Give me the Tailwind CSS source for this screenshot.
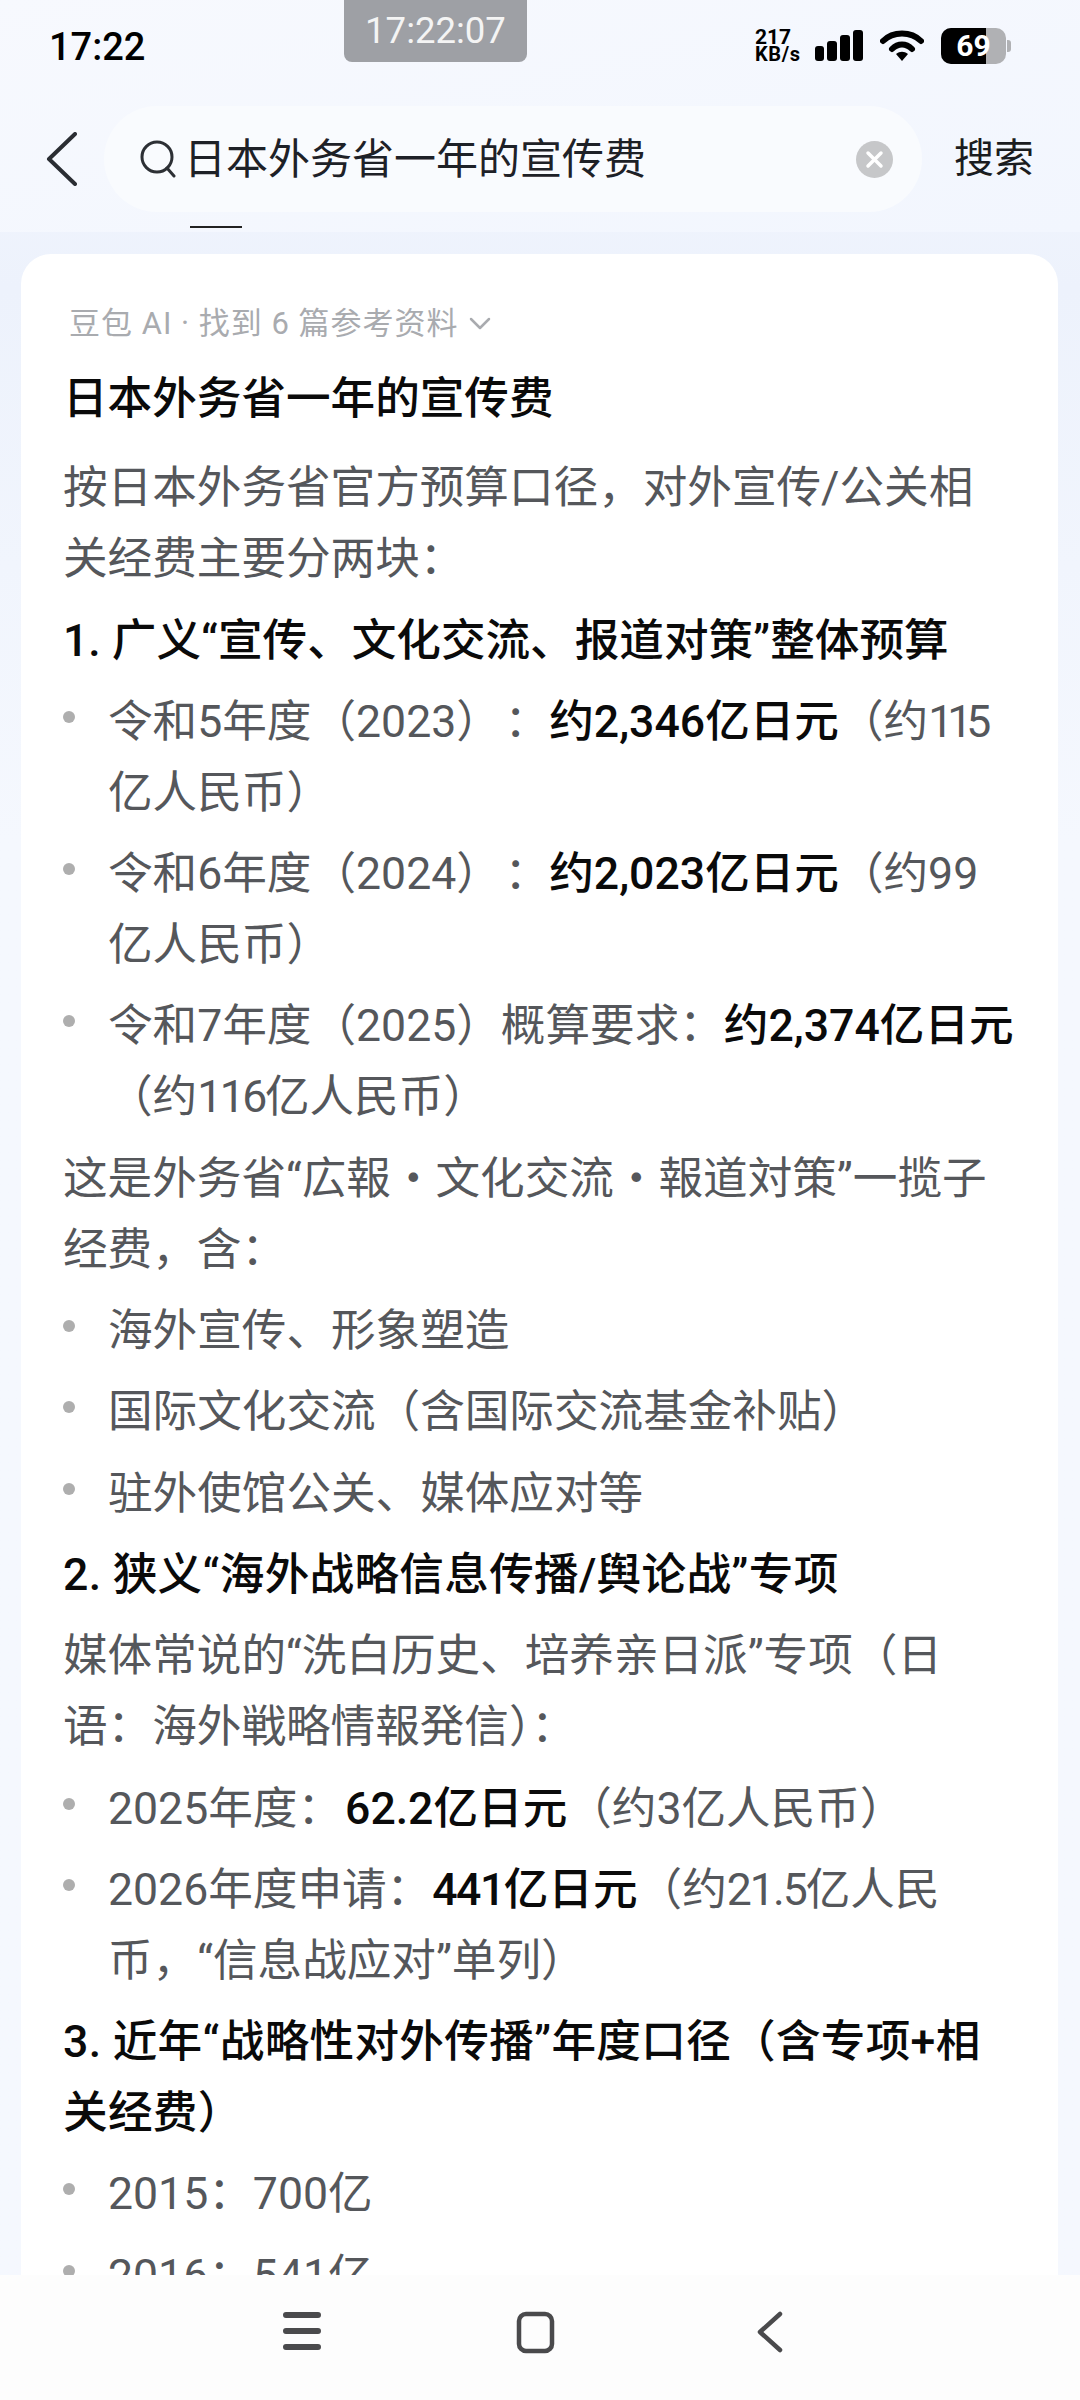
<!DOCTYPE html>
<html lang="zh-CN">
<head>
    <meta charset="utf-8" />
    <meta name="viewport" content="width=device-width, initial-scale=1.0">
    <script src="https://cdn.jsdelivr.net/npm/@tailwindcss/browser@4"></script>
    <title>搜索</title>
</head>
<body class="m-0">
<div class="relative flex flex-col w-[1080px] h-[2400px] overflow-hidden bg-gradient-to-b from-[#f4f7fe] via-[#edf2fc] via-[12%] to-[#f5f8fe] to-[35%] font-['Roboto','Noto_Sans_CJK_SC',sans-serif]">

    <!-- Screenshot time pill -->
    <div class="absolute left-[344px] top-0 w-[183px] h-[62px] rounded-b-[8px] bg-[#9ea0a5] text-[#f4f4f4] text-[36.5px] leading-[62px] text-center">17:22:07</div>

    <!-- Top area -->
    <div class="h-[232px] shrink-0 bg-gradient-to-br from-[#f7f9fe] to-[#f2f6fe]">
        <!-- Status bar -->
        <div class="flex items-center justify-between h-[92px] pl-[49px] pr-[69px]">
            <span class="text-[38px] font-medium text-black relative top-[1px]">17:22</span>
            <div class="flex items-center">
                <div class="flex flex-col text-black font-bold leading-[17px] text-[21px] w-[59px]"><span>217</span><span class="text-[20px] tracking-[0.6px]">KB/s</span></div>
                <svg class="ml-[0px]" width="50" height="34" viewBox="0 0 50 34" fill="#000">
                    <rect x="1" y="17" width="9" height="15" rx="3"/><rect x="13" y="12" width="10" height="20" rx="3"/><rect x="26" y="6" width="10" height="26" rx="3"/><rect x="39" y="1" width="10" height="31" rx="3"/>
                </svg>
                <svg class="ml-[16px]" width="44" height="34" viewBox="0 0 44 34" fill="none" stroke="#000" stroke-width="6" stroke-linecap="round">
                    <path d="M3 12 C13 2 31 2 41 12"/><path d="M12 20 C18 14 26 14 32 20"/><path d="M16 25 L22 32 L28 25 C24 22 20 22 16 25 Z" fill="#000" stroke="none"/>
                </svg>
                <div class="relative ml-[17px] flex items-center w-[65px] h-[36px] rounded-[10px] overflow-hidden bg-[#b0b1b4]">
                    <div class="absolute left-0 top-0 bottom-0 w-[45px] bg-black"></div>
                    <span class="relative w-[65px] text-center text-white font-bold text-[30px] leading-[36px]">69</span>
                </div>
                <div class="ml-[1px] w-[4px] h-[12px] rounded-r-[3px] bg-[#b0b1b4]"></div>
            </div>
        </div>

        <!-- Search row -->
        <div class="flex items-center h-[106px] mt-[14px]">
            <svg class="ml-[45px] shrink-0" width="32" height="54" viewBox="0 0 32 54" fill="none" stroke="#2a2d33" stroke-width="4" stroke-linecap="round" stroke-linejoin="round">
                <path d="M30 2 L4 27 L30 52"/>
            </svg>
            <div class="flex items-center ml-[27px] w-[818px] h-[106px] rounded-full bg-[#f9fbfe]">
                <svg class="ml-[36px] shrink-0" width="38" height="38" viewBox="0 0 38 38" fill="none" stroke="#2d3035" stroke-width="3">
                    <circle cx="17" cy="17" r="15"/><path d="M27 28 L34 36" stroke-linecap="round"/>
                </svg>
                <span class="ml-[6px] text-[42px] text-[#1e2127]">日本外务省一年的宣传费</span>
                <svg class="ml-auto mr-[29px] shrink-0" width="37" height="37" viewBox="0 0 37 37">
                    <circle cx="18.5" cy="18.5" r="18.5" fill="#c6c7c9"/><path d="M12 12 L25 25 M25 12 L12 25" stroke="#fff" stroke-width="3.5" stroke-linecap="round"/>
                </svg>
            </div>
            <span class="ml-[32px] text-[40px] text-[#1a1c20]">搜索</span>
        </div>
        <div class="ml-[190px] mt-[14px] w-[52px] h-[2px] bg-[#222]"></div>
    </div>

    <!-- Answer card -->
    <div class="flex-1 min-h-0 overflow-hidden mx-[21px] w-[1037px] mt-[22px] rounded-t-[30px] bg-white pl-[42px] pr-[20px]">
        <div class="flex items-center mt-[50px] h-[40px] pl-[6px] text-[31px] text-[#a9abaf]">
            <span class="tracking-[1px]">豆包 AI · 找到 6 篇参考资料</span>
            <svg class="ml-[10px]" width="22" height="14" viewBox="0 0 22 14" fill="none" stroke="#a9abaf" stroke-width="2.5" stroke-linecap="round" stroke-linejoin="round"><path d="M2 2 L11 11 L20 2"/></svg>
        </div>
        <div class="flex flex-col gap-[10.3px] mt-[20px] text-[44.6px] leading-[71px] text-[#55575b]">
            <p class="font-medium text-[#0a0a0a] mb-[8px]">日本外务省一年的宣传费</p>
            <p>按日本外务省官方预算口径，对外宣传/公关相<br>关经费主要分两块：</p>
            <p class="font-medium text-[#0a0a0a]">1. 广义“宣传、文化交流、报道对策”整体预算</p>

            <div class="flex"><i class="w-[12px] h-[12px] mt-[24px] mr-[33px] shrink-0 rounded-full bg-[#aeaeae]"></i><p>令和5年度（2023）<span class="ml-[26px] leading-none font-['Noto_Sans_CJK_TC']">：</span><b class="font-medium text-[#0a0a0a]">约2,346亿日元</b>（约<span class="tracking-[-6px]">115</span><br>亿人民币）</p></div>
            <div class="flex"><i class="w-[12px] h-[12px] mt-[24px] mr-[33px] shrink-0 rounded-full bg-[#aeaeae]"></i><p>令和6年度（2024）<span class="ml-[26px] leading-none font-['Noto_Sans_CJK_TC']">：</span><b class="font-medium text-[#0a0a0a]">约2,023亿日元</b>（约99<br>亿人民币）</p></div>
            <div class="flex"><i class="w-[12px] h-[12px] mt-[24px] mr-[33px] shrink-0 rounded-full bg-[#aeaeae]"></i><p>令和7年度（2025）概算要求：<b class="font-medium text-[#0a0a0a]">约2,374亿日元</b><br>（约<span class="tracking-[-2.5px]">116</span>亿人民币）</p></div>

            <p>这是外务省“広報・文化交流・報道対策”一揽子<br>经费，含：</p>

            <div class="flex"><i class="w-[12px] h-[12px] mt-[24px] mr-[33px] shrink-0 rounded-full bg-[#aeaeae]"></i><p>海外宣传、形象塑造</p></div>
            <div class="flex"><i class="w-[12px] h-[12px] mt-[24px] mr-[33px] shrink-0 rounded-full bg-[#aeaeae]"></i><p>国际文化交流（含国际交流基金补贴）</p></div>
            <div class="flex"><i class="w-[12px] h-[12px] mt-[24px] mr-[33px] shrink-0 rounded-full bg-[#aeaeae]"></i><p>驻外使馆公关、媒体应对等</p></div>

            <p class="font-medium text-[#0a0a0a] tracking-[0.3px]">2. 狭义“海外战略信息传播/舆论战”专项</p>
            <p>媒体常说的“洗白历史、培养亲日派”专项（日<br>语：海外戦略情報発信）：</p>

            <div class="flex"><i class="w-[12px] h-[12px] mt-[24px] mr-[33px] shrink-0 rounded-full bg-[#aeaeae]"></i><p>2025年度：<b class="font-medium text-[#0a0a0a] ml-[3px]">62.2亿日元</b>（约3亿人民币）</p></div>
            <div class="flex"><i class="w-[12px] h-[12px] mt-[24px] mr-[33px] shrink-0 rounded-full bg-[#aeaeae]"></i><p>2026年度申请：<b class="font-medium text-[#0a0a0a] ml-[1px]"><span class="tracking-[-1.5px]">441</span>亿日元</b>（约<span class="tracking-[-2px]">21.5</span>亿人民<br>币，“信息战应对”单列）</p></div>

            <p class="font-medium text-[#0a0a0a] tracking-[0.3px]">3. 近年“战略性对外传播”年度口径（含专项+相<br>关经费）</p>

            <div class="flex"><i class="w-[12px] h-[12px] mt-[24px] mr-[33px] shrink-0 rounded-full bg-[#aeaeae]"></i><p>2015：700亿</p></div>
            <div class="flex"><i class="w-[12px] h-[12px] mt-[24px] mr-[33px] shrink-0 rounded-full bg-[#aeaeae]"></i><p>2016：541亿</p></div>
        </div>
    </div>

    <!-- Bottom navigation -->
    <div class="relative flex items-center shrink-0 h-[125px] bg-[#fdfdfd]">
        <svg class="absolute left-[282px] top-[36px]" width="40" height="40" viewBox="0 0 40 40" stroke="#4a4a4c" stroke-width="6" stroke-linecap="round">
            <path d="M4 4 H36 M4 20 H36 M4 36 H36"/>
        </svg>
        <svg class="absolute left-[516px] top-[36px]" width="40" height="44" viewBox="0 0 40 44" fill="none" stroke="#4a4a4c" stroke-width="4.5">
            <rect x="3" y="3" width="33" height="37" rx="7"/>
        </svg>
        <svg class="absolute left-[756px] top-[36px]" width="28" height="42" viewBox="0 0 28 42" fill="none" stroke="#4a4a4c" stroke-width="4.5" stroke-linecap="round" stroke-linejoin="round">
            <path d="M24 3 L4 21 L24 39"/>
        </svg>
    </div>
</div>
</body>
</html>
